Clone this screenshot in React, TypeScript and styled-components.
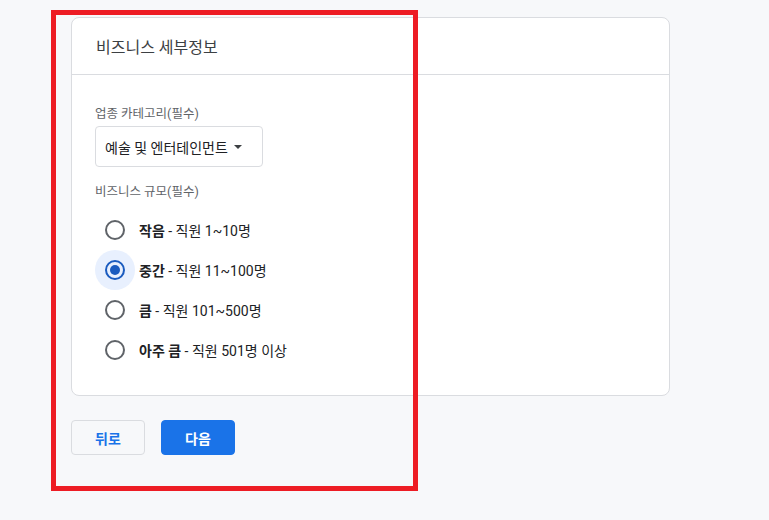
import React, { useState } from "react";
import styled, { createGlobalStyle } from "styled-components";

const GlobalStyle = createGlobalStyle`
  html, body {
    margin: 0;
    padding: 0;
    background: #f7f8fa;
  }
  body {
    font-family: Roboto, "Noto Sans CJK KR", sans-serif;
    color: #202124;
  }
`;

const Page = styled.div`
  position: relative;
  width: 769px;
  height: 520px;
  box-sizing: border-box;
  padding: 17px 0 0 71px;
`;

const Card = styled.section`
  width: 599px;
  box-sizing: border-box;
  background: #fff;
  border: 1px solid #dadce0;
  border-radius: 8px;
`;

const CardHeader = styled.h2`
  margin: 0;
  height: 56px;
  display: flex;
  align-items: center;
  padding-left: 24px;
  border-bottom: 1px solid #dadce0;
  font-size: 16px;
  font-weight: 400;
  color: #3c4043;
`;

const CardBody = styled.div`
  padding: 31px 24px 25px 23px;
  display: flex;
  flex-direction: column;
  align-items: flex-start;
`;

const FieldLabel = styled.div<{ $gap: number }>`
  font-size: 12.5px;
  line-height: 16px;
  color: #5f6368;
  margin-bottom: ${(p) => p.$gap}px;
`;

const Select = styled.button`
  height: 41px;
  box-sizing: border-box;
  display: flex;
  align-items: center;
  gap: 6px;
  padding: 0 20px 0 9px;
  margin-bottom: 17px;
  background: #fff;
  border: 1px solid #dadce0;
  border-radius: 4px;
  font-family: inherit;
  font-size: 14px;
  color: #202124;
  cursor: pointer;
`;

const Caret = styled.span`
  width: 0;
  height: 0;
  margin-top: 1px;
  border-left: 4px solid transparent;
  border-right: 4px solid transparent;
  border-top: 4px solid #3c4043;
`;

const RadioList = styled.div`
  display: flex;
  flex-direction: column;
`;

const RadioRow = styled.label`
  height: 40px;
  display: flex;
  align-items: center;
  gap: 4px;
  font-size: 14px;
  color: #202124;
  cursor: pointer;
`;

const Halo = styled.span<{ $on: boolean }>`
  width: 40px;
  height: 40px;
  border-radius: 50%;
  display: flex;
  align-items: center;
  justify-content: center;
  background: ${(p) => (p.$on ? "#e8f0fe" : "transparent")};
`;

const Circle = styled.span<{ $on: boolean }>`
  width: 20px;
  height: 20px;
  box-sizing: border-box;
  border-radius: 50%;
  border: 2px solid ${(p) => (p.$on ? "#1a5bbf" : "#5f6368")};
  display: flex;
  align-items: center;
  justify-content: center;
  &::after {
    content: "";
    width: 10px;
    height: 10px;
    border-radius: 50%;
    background: ${(p) => (p.$on ? "#1a5bbf" : "transparent")};
  }
`;

const Strong = styled.b`
  font-weight: 700;
`;

const Actions = styled.div`
  display: flex;
  gap: 16px;
  margin-top: 24px;
`;

const Button = styled.button<{ $primary?: boolean }>`
  width: 74px;
  height: 35px;
  border-radius: 4px;
  font-family: inherit;
  font-size: 14px;
  font-weight: 700;
  cursor: pointer;
  border: 1px solid ${(p) => (p.$primary ? "#1a73e8" : "#dadce0")};
  background: ${(p) => (p.$primary ? "#1a73e8" : "transparent")};
  color: ${(p) => (p.$primary ? "#fff" : "#1a73e8")};
`;

const Highlight = styled.div`
  position: absolute;
  left: 51px;
  top: 10px;
  width: 367px;
  height: 481px;
  box-sizing: border-box;
  border: 5px solid #ed1c24;
  pointer-events: none;
`;

const sizes = [
  { name: "작음", desc: " - 직원 1~10명" },
  { name: "중간", desc: " - 직원 11~100명" },
  { name: "큼", desc: " - 직원 101~500명" },
  { name: "아주 큼", desc: " - 직원 501명 이상" },
];

export default function App() {
  const [selected, setSelected] = useState(1);

  return (
    <Page>
      <GlobalStyle />
      <Card>
        <CardHeader>비즈니스 세부정보</CardHeader>
        <CardBody>
          <FieldLabel $gap={4}>업종 카테고리(필수)</FieldLabel>
          <Select type="button">
            예술 및 엔터테인먼트
            <Caret />
          </Select>
          <FieldLabel $gap={10}>비즈니스 규모(필수)</FieldLabel>
          <RadioList>
            {sizes.map((s, i) => (
              <RadioRow key={s.name} onClick={() => setSelected(i)}>
                <Halo $on={selected === i}>
                  <Circle $on={selected === i} />
                </Halo>
                <span>
                  <Strong>{s.name}</Strong>
                  {s.desc}
                </span>
              </RadioRow>
            ))}
          </RadioList>
        </CardBody>
      </Card>
      <Actions>
        <Button type="button">뒤로</Button>
        <Button type="button" $primary>
          다음
        </Button>
      </Actions>
      <Highlight />
    </Page>
  );
}
